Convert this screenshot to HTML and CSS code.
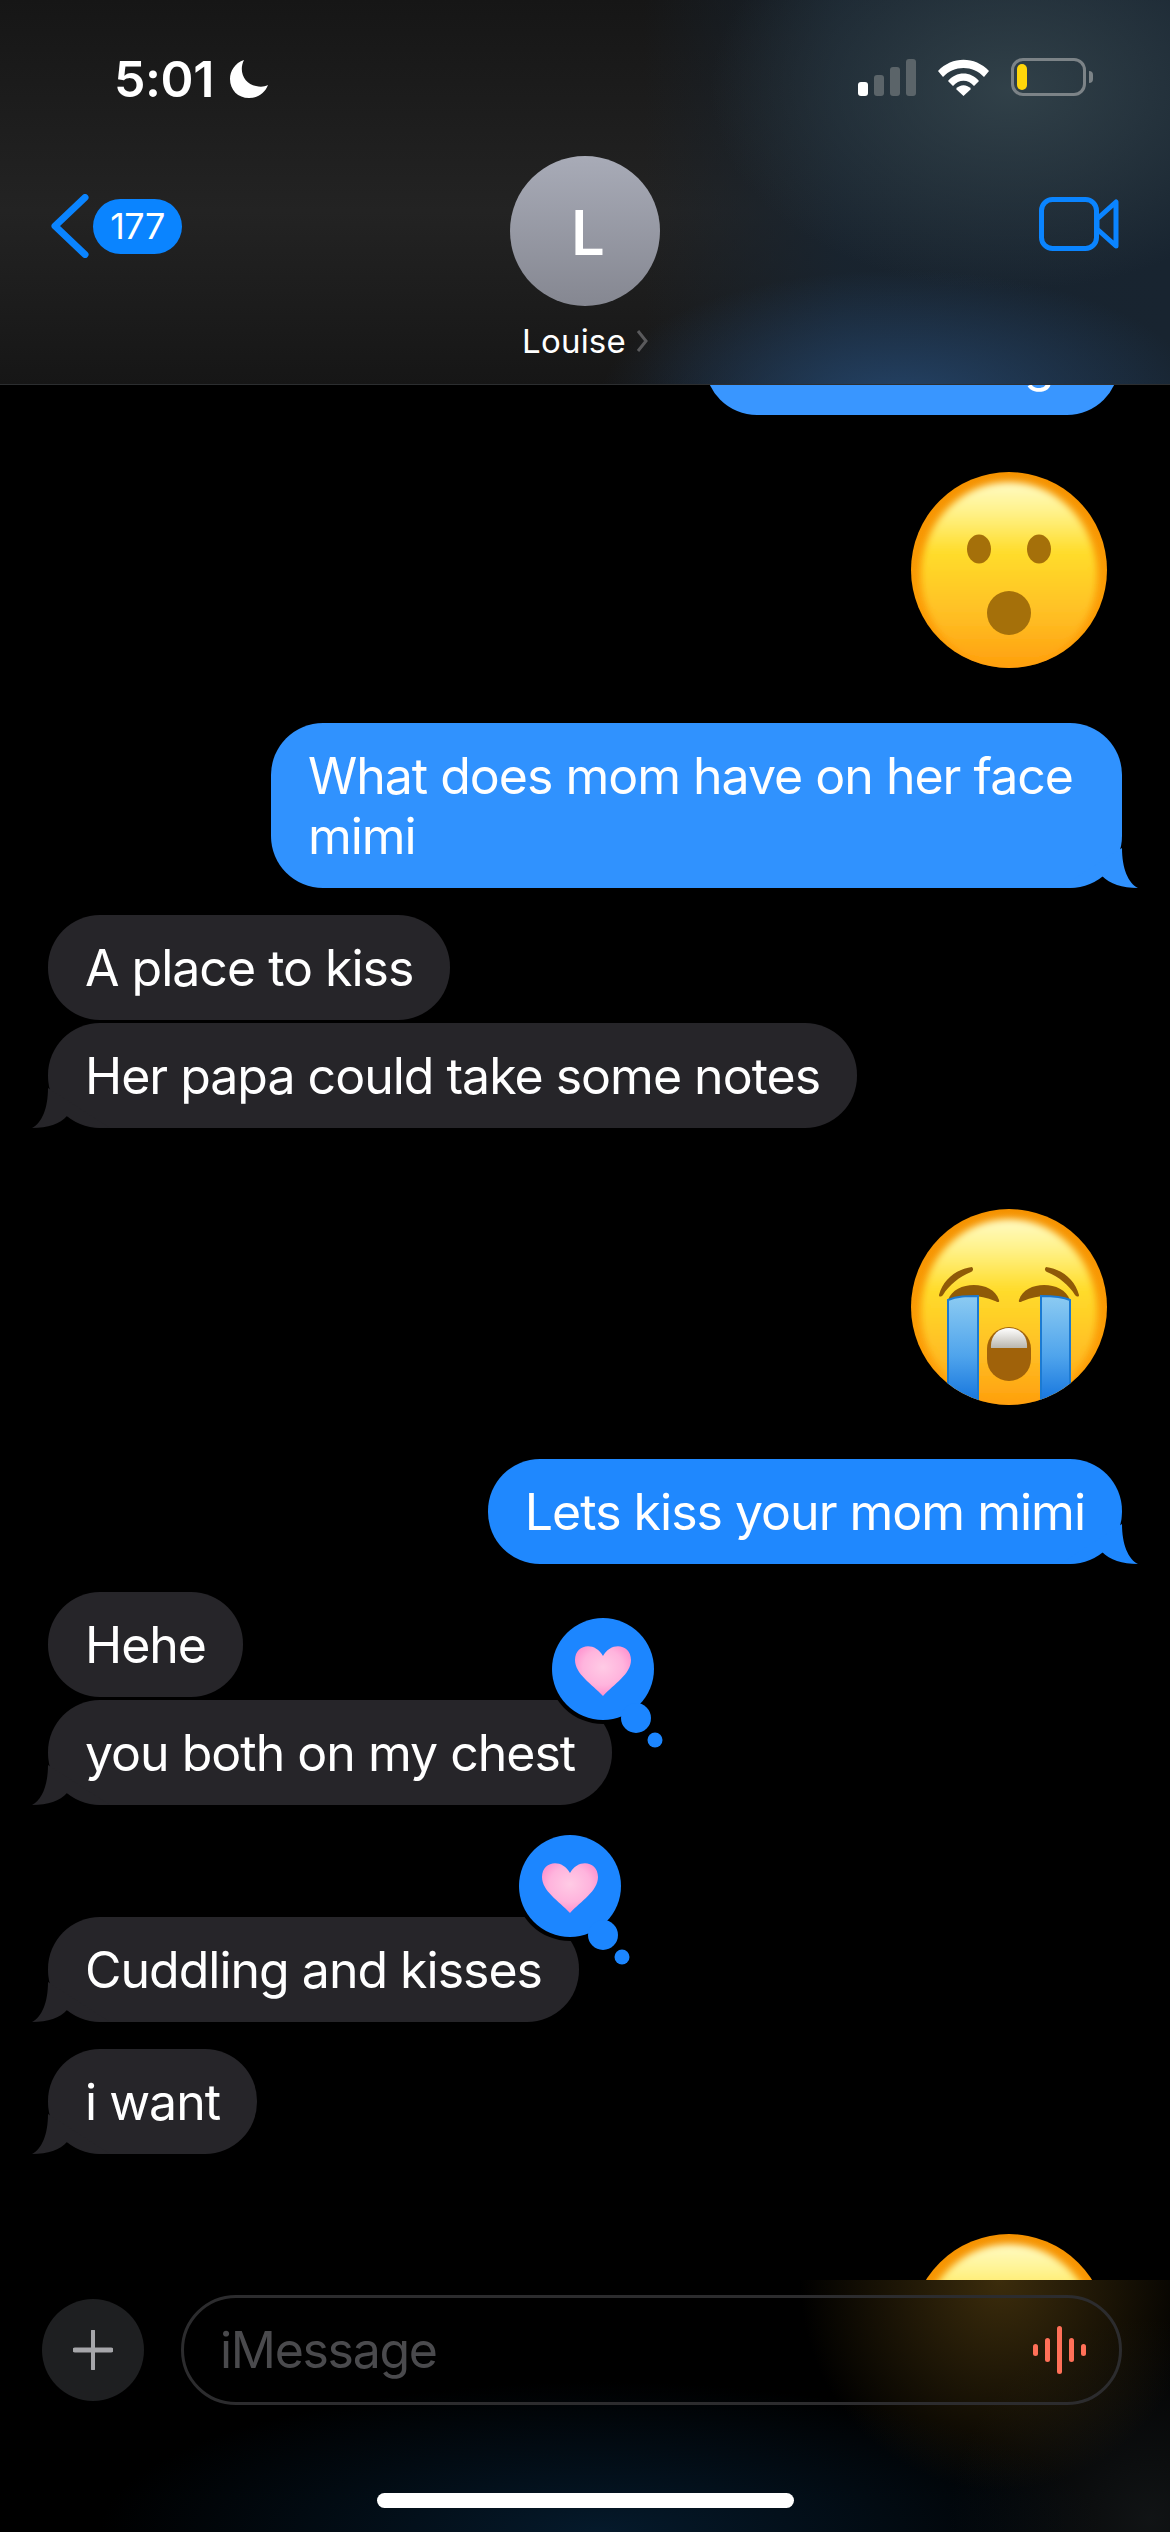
FILE: index.html
```html
<!DOCTYPE html>
<html>
<head>
  <title>Messages</title>
  <link rel="stylesheet" href="styles.css">
</head>
<body>
  <svg class="defs" width="0" height="0">
    <defs>
      <linearGradient id="faceBase" x1="0" y1="0" x2="0" y2="1">
        <stop offset="0" stop-color="#f59200"/>
        <stop offset="0.6" stop-color="#fb9c06"/>
        <stop offset="1" stop-color="#ff9d08"/>
      </linearGradient>
      <linearGradient id="faceFill" x1="0" y1="0" x2="0" y2="1">
        <stop offset="0" stop-color="#fffbc4"/>
        <stop offset="0.16" stop-color="#fff28a"/>
        <stop offset="0.38" stop-color="#ffdc2a"/>
        <stop offset="0.72" stop-color="#ffbe24"/>
        <stop offset="1" stop-color="#ff9f0c"/>
      </linearGradient>
      <filter id="soft" x="-10%" y="-10%" width="120%" height="120%">
        <feGaussianBlur stdDeviation="3.5"/>
      </filter>
      <linearGradient id="tear" x1="0" y1="0" x2="0" y2="1">
        <stop offset="0" stop-color="#8ccbf2"/>
        <stop offset="0.55" stop-color="#4fa4ec"/>
        <stop offset="1" stop-color="#1272dc"/>
      </linearGradient>
      <linearGradient id="teeth" x1="0" y1="0" x2="0" y2="1">
        <stop offset="0" stop-color="#ffffff"/>
        <stop offset="1" stop-color="#b9b6ae"/>
      </linearGradient>
      <radialGradient id="heart" cx="50%" cy="42%" r="60%">
        <stop offset="0" stop-color="#ffcbe5"/>
        <stop offset="0.6" stop-color="#ffb4dd"/>
        <stop offset="1" stop-color="#ff8ccc"/>
      </radialGradient>
      <clipPath id="faceClip"><circle cx="98" cy="98" r="98"/></clipPath>
      <symbol id="face" viewBox="0 0 196 196">
        <circle cx="98" cy="98" r="98" fill="url(#faceBase)"/>
        <ellipse cx="98" cy="103" rx="88" ry="93" fill="url(#faceFill)" filter="url(#soft)" clip-path="url(#faceClip)"/>
      </symbol>
      <symbol id="tapback" viewBox="0 0 124 140">
        <circle cx="55" cy="55" r="55" fill="#000"/>
        <circle cx="55" cy="55" r="51" fill="#1c86ff"/>
        <circle cx="88" cy="104" r="15" fill="#1c86ff"/>
        <circle cx="107" cy="126" r="7.5" fill="#1c86ff"/>
        <path d="M55 82 C44 70 27 60 27 46 C27 30 47 27 55 42 C63 27 83 30 83 46 C83 60 66 70 55 82 Z" fill="url(#heart)"/>
      </symbol>
    </defs>
  </svg>

  <div class="phone">
    <header class="topbar">
      <div class="status">
        <div class="clock">
          <span class="time">5:01</span>
          <svg class="moon" viewBox="0 0 38 38"><path d="M14 0 C5 3 0 11 0 19 C0 30 8 38 19 38 C28 38 35 33 38 25 C34 27 30 27 26 26 C15 24 8 12 14 0 Z" fill="#fff"/></svg>
        </div>
        <div class="status-icons">
          <div class="signal">
            <span class="bar bar1"></span>
            <span class="bar bar2"></span>
            <span class="bar bar3"></span>
            <span class="bar bar4"></span>
          </div>
          <svg class="wifi" viewBox="0 0 51 37">
            <path d="M0 12 C14 -3 37 -3 51 12 L46 18 C35 6 16 6 5 18 Z" fill="#fff"/>
            <path d="M10 22 C18 12 33 12 41 22 L36 27 C30 20 21 20 15 27 Z" fill="#fff"/>
            <path d="M18 30 C22 25 29 25 33 30 L25.5 37 Z" fill="#fff"/>
          </svg>
          <div class="battery"><span class="charge"></span></div>
          <span class="battery-cap"></span>
        </div>
      </div>
      <div class="nav">
        <div class="back">
          <svg class="chevron" viewBox="0 0 38 64"><path d="M34 3.5 L4 32 L34 60.5" fill="none" stroke="#0a84ff" stroke-width="7" stroke-linecap="round" stroke-linejoin="round"/></svg>
          <span class="badge">177</span>
        </div>
        <div class="contact">
          <div class="avatar">L</div>
          <div class="name">Louise<svg class="name-arrow" viewBox="0 0 12 22"><path d="M2 1 L10 11 L2 21" fill="none" stroke="#5a5a5c" stroke-width="3"/></svg></div>
        </div>
        <svg class="video" viewBox="0 0 80 54">
          <rect x="2.5" y="2.5" width="55" height="49" rx="11" fill="none" stroke="#0a84ff" stroke-width="5"/>
          <path d="M58 22 L77 5 L77 49 L58 32 Z" fill="none" stroke="#0a84ff" stroke-width="5" stroke-linejoin="round"/>
        </svg>
      </div>
    </header>

    <main class="chat">
      <div class="bubble out out-1 first">And the hugs</div>

      <svg class="emoji gap-57" viewBox="0 0 196 196">
        <use href="#face"/>
        <ellipse cx="68" cy="77" rx="12" ry="14.5" fill="#a5700a"/>
        <ellipse cx="128" cy="77" rx="12" ry="14.5" fill="#a5700a"/>
        <circle cx="98" cy="141" r="22" fill="#a5700a"/>
      </svg>

      <div class="bubble out out-2 gap-55">What does mom have on her face<br>mimi<svg class="tail tail-out" viewBox="0 0 78 40"><path d="M62 0 C62 20 68 35 78 40 C62 40 50 36 42 28 C32 36 20 40 0 40 Z" fill="#3092fe"/></svg></div>

      <div class="bubble in gap-27">A place to kiss</div>
      <div class="bubble in gap-3">Her papa could take some notes<svg class="tail tail-in" viewBox="0 0 78 40"><path d="M16 0 C16 20 10 35 0 40 C16 40 28 36 35 28 C46 36 58 40 78 40 Z" fill="#262529"/></svg></div>

      <svg class="emoji gap-81" viewBox="0 0 196 196">
        <use href="#face"/>
        <path d="M28 86 C32 70 46 60 61 58 C63 60 62 62 60 63 C48 68 38 76 32 86 C30 88 28 88 28 86 Z" fill="#8f5a08"/>
        <path d="M168 86 C164 70 150 60 135 58 C133 60 134 62 136 63 C148 68 158 76 164 86 C166 88 168 88 168 86 Z" fill="#8f5a08"/>
        <path d="M37 91 C44 71 82 71 88 91 C89 94 86 93 84 92 C68 85 52 86 37 91 Z" fill="#8f5a08"/>
        <path d="M159 91 C152 71 114 71 108 91 C107 94 110 93 112 92 C128 85 144 86 159 91 Z" fill="#8f5a08"/>
        <g clip-path="url(#faceClip)">
          <path d="M37 91 C46 87 56 87 67 87 L67 196 L37 196 Z" fill="url(#tear)" stroke="#1b7ad2" stroke-width="2"/>
          <path d="M159 91 C150 87 140 87 130 87 L130 196 L159 196 Z" fill="url(#tear)" stroke="#1b7ad2" stroke-width="2"/>
        </g>
        <rect x="76" y="118" width="44" height="54" rx="22" fill="#a0620a"/>
        <path d="M80 139 C79 126 88 119 98 119 C108 119 117 126 116 139 Z" fill="url(#teeth)"/>
      </svg>

      <div class="bubble out out-3 gap-54">Lets kiss your mom mimi<svg class="tail tail-out" viewBox="0 0 78 40"><path d="M62 0 C62 20 68 35 78 40 C62 40 50 36 42 28 C32 36 20 40 0 40 Z" fill="#1f88fe"/></svg></div>

      <div class="bubble in gap-28">Hehe</div>
      <div class="bubble in gap-3">you both on my chest<svg class="tail tail-in" viewBox="0 0 78 40"><path d="M16 0 C16 20 10 35 0 40 C16 40 28 36 35 28 C46 36 58 40 78 40 Z" fill="#262529"/></svg><svg class="reaction" viewBox="0 0 124 140"><use href="#tapback"/></svg></div>

      <div class="bubble in gap-112">Cuddling and kisses<svg class="tail tail-in" viewBox="0 0 78 40"><path d="M16 0 C16 20 10 35 0 40 C16 40 28 36 35 28 C46 36 58 40 78 40 Z" fill="#262529"/></svg><svg class="reaction" viewBox="0 0 124 140"><use href="#tapback"/></svg></div>
      <div class="bubble in gap-27">i want<svg class="tail tail-in" viewBox="0 0 78 40"><path d="M16 0 C16 20 10 35 0 40 C16 40 28 36 35 28 C46 36 58 40 78 40 Z" fill="#262529"/></svg></div>

      <svg class="emoji gap-80" viewBox="0 0 196 196">
        <use href="#face"/>
      </svg>
    </main>

    <footer class="composer">
      <div class="input-row">
        <div class="plus">
          <svg class="plus-icon" viewBox="0 0 40 40"><path d="M20 1 V39" stroke="#a6a6aa" stroke-width="4" stroke-linecap="round"/><path d="M2 20 H38" stroke="#a6a6aa" stroke-width="5" stroke-linecap="round"/></svg>
        </div>
        <div class="field">
          <span class="placeholder">iMessage</span>
          <div class="wave">
            <span class="wave-s"></span>
            <span class="wave-m"></span>
            <span class="wave-l"></span>
            <span class="wave-m"></span>
            <span class="wave-s"></span>
          </div>
        </div>
      </div>
      <div class="home"></div>
    </footer>
  </div>
</body>
</html>
```

FILE: styles.css
```css
html, body {
  margin: 0;
  padding: 0;
  background-color: #000000;
}

body {
  font-family: Inter, "Noto Sans", sans-serif;
  color: #ffffff;
}

.defs {
  position: absolute;
}

.phone {
  width: 1170px;
  height: 2532px;
  display: flex;
  flex-direction: column;
  overflow: hidden;
}

/* top bar */
.topbar {
  flex: none;
  height: 384px;
  box-sizing: content-box;
  border-bottom: 1px solid #2c2e30;
  background:
    radial-gradient(ellipse 300px 130px at 900px 400px, rgba(38, 72, 112, 0.85), rgba(38, 72, 112, 0) 100%),
    radial-gradient(ellipse 300px 200px at 1010px 90px, rgba(50, 66, 74, 0.95), rgba(44, 58, 66, 0) 100%),
    linear-gradient(90deg, rgba(24, 36, 48, 0) 55%, rgba(24, 36, 48, 0.9) 72%, rgba(24, 36, 48, 1) 100%),
    linear-gradient(180deg, #161616 0%, #232323 55%, #161616 100%);
}

.status {
  display: flex;
  justify-content: space-between;
  height: 156px;
  padding: 58px 77px 0 114px;
  box-sizing: border-box;
}

.clock {
  display: flex;
  align-items: flex-start;
  gap: 16px;
}

.time {
  font-size: 50px;
  font-weight: 600;
  line-height: 42px;
  letter-spacing: -0.4px;
}

.moon {
  width: 38px;
  height: 38px;
  margin-top: 2px;
}

.status-icons {
  display: flex;
  align-items: flex-start;
}

.signal {
  display: flex;
  align-items: flex-end;
  gap: 6px;
  height: 37px;
  margin-top: 1px;
}

.bar {
  width: 10px;
  border-radius: 3px;
  background-color: #5b6469;
}

.bar1 {
  height: 14px;
  background-color: #ffffff;
}

.bar2 {
  height: 21px;
}

.bar3 {
  height: 29px;
}

.bar4 {
  height: 37px;
}

.wifi {
  width: 51px;
  height: 37px;
  margin: 1px 22px 0 22px;
}

.battery {
  width: 75px;
  height: 38px;
  box-sizing: border-box;
  border: 3px solid #7c8387;
  border-radius: 12px;
  padding: 3px;
}

.charge {
  display: block;
  width: 10px;
  height: 100%;
  border-radius: 5px;
  background-color: #ffd60a;
}

.battery-cap {
  width: 4px;
  height: 12px;
  margin: 13px 0 0 3px;
  border-radius: 0 6px 6px 0;
  background-color: #7c8387;
}

.nav {
  position: relative;
  height: 228px;
}

.back {
  position: absolute;
  left: 51px;
  top: 38px;
  display: flex;
  align-items: center;
  gap: 4px;
}

.chevron {
  width: 38px;
  height: 64px;
}

.badge {
  width: 89px;
  height: 55px;
  border-radius: 28px;
  background-color: #0a84ff;
  font-size: 36px;
  line-height: 55px;
  text-align: center;
  letter-spacing: -0.5px;
}

.contact {
  display: flex;
  flex-direction: column;
  align-items: center;
}

.avatar {
  width: 150px;
  height: 150px;
  box-sizing: border-box;
  padding-left: 4px;
  border-radius: 50%;
  background: linear-gradient(180deg, #a8abb7, #858791);
  font-family: "Open Sans", sans-serif;
  font-size: 64px;
  font-weight: 600;
  line-height: 150px;
  text-align: center;
}

.name {
  display: flex;
  align-items: center;
  gap: 10px;
  margin-top: 18px;
  font-size: 33px;
  line-height: 34px;
  letter-spacing: 0.2px;
}

.name-arrow {
  width: 12px;
  height: 22px;
}

.video {
  position: absolute;
  right: 51px;
  top: 41px;
  width: 80px;
  height: 54px;
}

/* messages */
.chat {
  flex: 1;
  min-height: 0;
  overflow: hidden;
  display: flex;
  flex-direction: column;
  padding: 0 48px;
}

.bubble {
  position: relative;
  flex: none;
  width: fit-content;
  padding: 23px 37px 22px;
  border-radius: 52px;
  font-size: 50px;
  line-height: 60px;
  letter-spacing: -1px;
  white-space: nowrap;
}

.in {
  background-color: #262529;
}

.out {
  align-self: flex-end;
}

.out-1 {
  background-color: #3996ff;
}

.out-2 {
  background-color: #3092fe;
  padding-right: 49px;
}

.out-3 {
  background-color: #1f88fe;
}

.first {
  margin-top: -75px;
  margin-right: 3px;
  padding-left: 72px;
  padding-right: 40px;
}

.tail {
  position: absolute;
  bottom: 0;
  width: 78px;
  height: 40px;
}

.tail-out {
  right: -16px;
}

.tail-in {
  left: -16px;
}

.reaction {
  position: absolute;
  right: -60px;
  top: -86px;
  width: 124px;
  height: 140px;
}

.emoji {
  flex: none;
  align-self: flex-end;
  width: 196px;
  height: 196px;
  margin-right: 15px;
}

.gap-3 {
  margin-top: 3px;
}

.gap-27 {
  margin-top: 27px;
}

.gap-28 {
  margin-top: 28px;
}

.gap-54 {
  margin-top: 54px;
}

.gap-55 {
  margin-top: 55px;
}

.gap-57 {
  margin-top: 57px;
}

.gap-80 {
  margin-top: 80px;
}

.gap-81 {
  margin-top: 81px;
}

.gap-112 {
  margin-top: 112px;
}

/* composer */
.composer {
  flex: none;
  height: 252px;
  box-sizing: border-box;
  padding-top: 15px;
  background:
    radial-gradient(ellipse 200px 210px at 1000px 0px, rgba(70, 52, 14, 0.85), rgba(60, 44, 12, 0) 100%),
    radial-gradient(ellipse 500px 150px at 600px 252px, rgba(6, 32, 54, 0.8), rgba(6, 32, 54, 0) 100%),
    radial-gradient(ellipse 200px 200px at 1150px 240px, rgba(24, 28, 30, 0.7), rgba(24, 28, 30, 0) 100%),
    #000000;
}

.input-row {
  display: flex;
  align-items: center;
  gap: 37px;
  padding: 0 48px 0 42px;
}

.plus {
  flex: none;
  width: 102px;
  height: 102px;
  border-radius: 50%;
  background-color: #1e1f21;
  display: flex;
  align-items: center;
  justify-content: center;
}

.plus-icon {
  width: 40px;
  height: 40px;
}

.field {
  flex: 1;
  height: 110px;
  box-sizing: border-box;
  border: 3px solid #2c2c2e;
  border-radius: 55px;
  display: flex;
  align-items: center;
  justify-content: space-between;
  padding: 0 33px 0 36px;
}

.placeholder {
  font-size: 50px;
  letter-spacing: -1.3px;
  color: #4a4a4d;
}

.wave {
  display: flex;
  align-items: center;
  gap: 7px;
}

.wave span {
  width: 5px;
  border-radius: 3px;
  background-color: #ff7058;
}

.wave-s {
  height: 12px;
}

.wave-m {
  height: 24px;
}

.wave-l {
  height: 48px;
}

.home {
  width: 417px;
  height: 15px;
  margin: 88px auto 0;
  border-radius: 8px;
  background-color: #ffffff;
}
```
